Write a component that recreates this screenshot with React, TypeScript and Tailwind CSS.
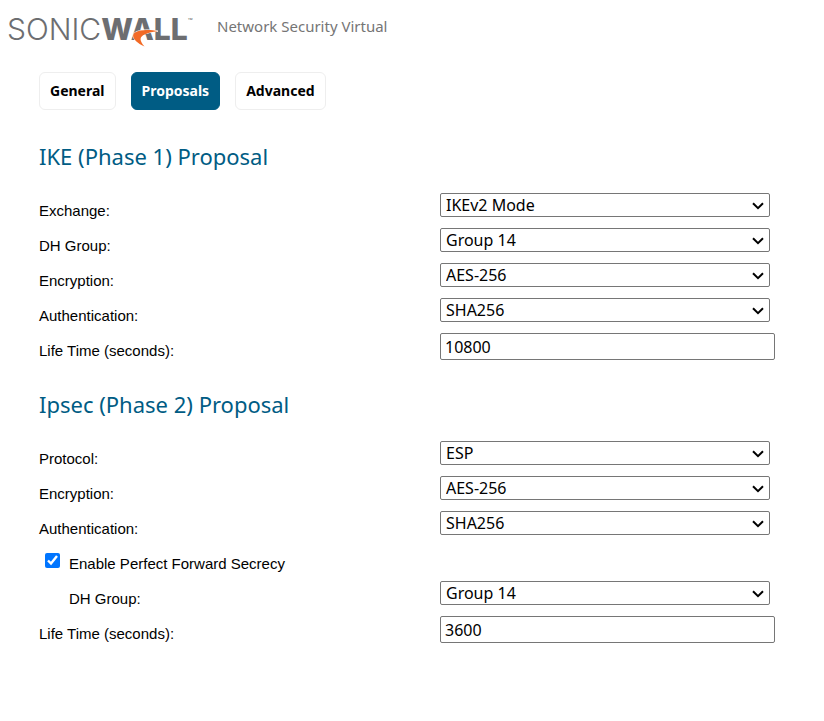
import React, { useState } from 'react';

const tabs = ['General', 'Proposals', 'Advanced'];

function Logo() {
  return (
    <div
      className="relative flex h-14 w-[190px] items-center pt-px font-['Inter',sans-serif] text-[30px] leading-14 text-[#6d6e71]"
      aria-label="SonicWall"
    >
      <span className="font-light">SONIC</span>
      <span className="font-extrabold">WALL</span>
      <span className="mb-4 text-[8px] leading-4">™</span>
      <svg className="absolute left-[124px] top-[28px]" width="28" height="20" viewBox="0 0 28 20" fill="none">
        <path
          d="M27 3.2C20 1.400 9 1.200 4 4.500C-.5 7.500 3.500 14 13.500 18.500C9 13.500 8 9.800 12.500 7C16 4.800 21 4 27 3.200Z"
          fill="#f26a25"
          stroke="#fff"
          strokeWidth="1"
          paintOrder="stroke"
        />
      </svg>
    </div>
  );
}

interface RowProps {
  id: string;
  label: string;
  indent?: boolean;
  children: React.ReactNode;
}

function Row({ id, label, indent, children }: RowProps) {
  return (
    <div className="grid h-[35px] grid-cols-[401px_1fr] items-start">
      <label htmlFor={id} className={indent ? 'pl-[30px] leading-9' : 'leading-9'}>
        {label}
      </label>
      {children}
    </div>
  );
}

interface FieldProps {
  id: string;
  label: string;
  value: string;
  options?: string[];
  indent?: boolean;
}

function SelectRow({ id, label, value, options = [], indent }: FieldProps) {
  return (
    <Row id={id} label={label} indent={indent}>
      <div className="relative mr-[5px] flex">
        <select
          id={id}
          defaultValue={value}
          className="h-6 w-full appearance-none rounded-[2px] border border-[#767676] bg-white pr-6 pl-[5px] font-['Noto_Sans',sans-serif] text-base leading-5 text-black"
        >
          {[value, ...options].map((option) => (
            <option key={option}>{option}</option>
          ))}
        </select>
        <svg
          className="pointer-events-none absolute top-[9px] right-[6px]"
          width="12"
          height="8"
          viewBox="0 0 12 8"
          fill="none"
          stroke="#000"
          strokeWidth="2"
        >
          <path d="M1 1.200L6 6.200L11 1.200" />
        </svg>
      </div>
    </Row>
  );
}

function InputRow({ id, label, value }: FieldProps) {
  return (
    <Row id={id} label={label}>
      <input
        id={id}
        type="text"
        defaultValue={value}
        className="h-[27px] w-full rounded-[2px] border border-[#767676] bg-white px-1 font-['Noto_Sans',sans-serif] text-base leading-5 text-black"
      />
    </Row>
  );
}

function SectionTitle({ children }: { children: React.ReactNode }) {
  return (
    <h2 className="py-5 font-['Noto_Sans',sans-serif] text-[22px] leading-[33px] text-[#005c84]">
      {children}
    </h2>
  );
}

export default function App() {
  const [active, setActive] = useState('Proposals');
  const [pfs, setPfs] = useState(true);

  return (
    <div className="min-h-screen bg-white font-['Liberation_Sans',Arial,sans-serif] text-[15px] text-black">
      <header className="flex h-14 items-center gap-5 pl-[7px]">
        <Logo />
        <span className="pb-1 font-['Noto_Sans',sans-serif] text-[15px] leading-6 text-[#757575]">
          Network Security Virtual
        </span>
      </header>

      <main className="pt-4 pr-[49px] pl-[39px]">
        <nav className="flex gap-[15px] pb-[10px]">
          {tabs.map((tab) => (
            <button
              key={tab}
              type="button"
              onClick={() => setActive(tab)}
              className={
                tab === active
                  ? "h-[38px] rounded-md border border-[#005c84] bg-[#005c84] px-[10px] font-['Noto_Sans',sans-serif] text-sm font-bold text-white"
                  : "h-[38px] rounded-md border border-[#eeeeee] bg-white px-[10px] font-['Noto_Sans',sans-serif] text-sm font-bold text-black"
              }
            >
              {tab}
            </button>
          ))}
        </nav>

        <form>
          <SectionTitle>IKE (Phase 1) Proposal</SectionTitle>
          <SelectRow id="exchange" label="Exchange:" value="IKEv2 Mode" options={['Main Mode', 'Aggressive Mode']} />
          <SelectRow id="ike-dh" label="DH Group:" value="Group 14" options={['Group 2', 'Group 5']} />
          <SelectRow id="ike-enc" label="Encryption:" value="AES-256" options={['AES-128', 'AES-192']} />
          <SelectRow id="ike-auth" label="Authentication:" value="SHA256" options={['SHA384', 'SHA512']} />
          <InputRow id="ike-life" label="Life Time (seconds):" value="10800" />

          <SectionTitle>Ipsec (Phase 2) Proposal</SectionTitle>
          <SelectRow id="protocol" label="Protocol:" value="ESP" options={['AH']} />
          <SelectRow id="ipsec-enc" label="Encryption:" value="AES-256" options={['AES-128', 'AES-192']} />
          <SelectRow id="ipsec-auth" label="Authentication:" value="SHA256" options={['SHA384', 'SHA512']} />
          <div className="flex h-[35px] items-start gap-[9px] pl-[6px]">
            <input
              id="pfs"
              type="checkbox"
              checked={pfs}
              onChange={(e) => setPfs(e.target.checked)}
              className="mt-[7px] size-[15px]"
            />
            <label htmlFor="pfs" className="leading-9">
              Enable Perfect Forward Secrecy
            </label>
          </div>
          <SelectRow id="ipsec-dh" label="DH Group:" value="Group 14" options={['Group 2', 'Group 5']} indent />
          <InputRow id="ipsec-life" label="Life Time (seconds):" value="3600" />
        </form>
      </main>
    </div>
  );
}
